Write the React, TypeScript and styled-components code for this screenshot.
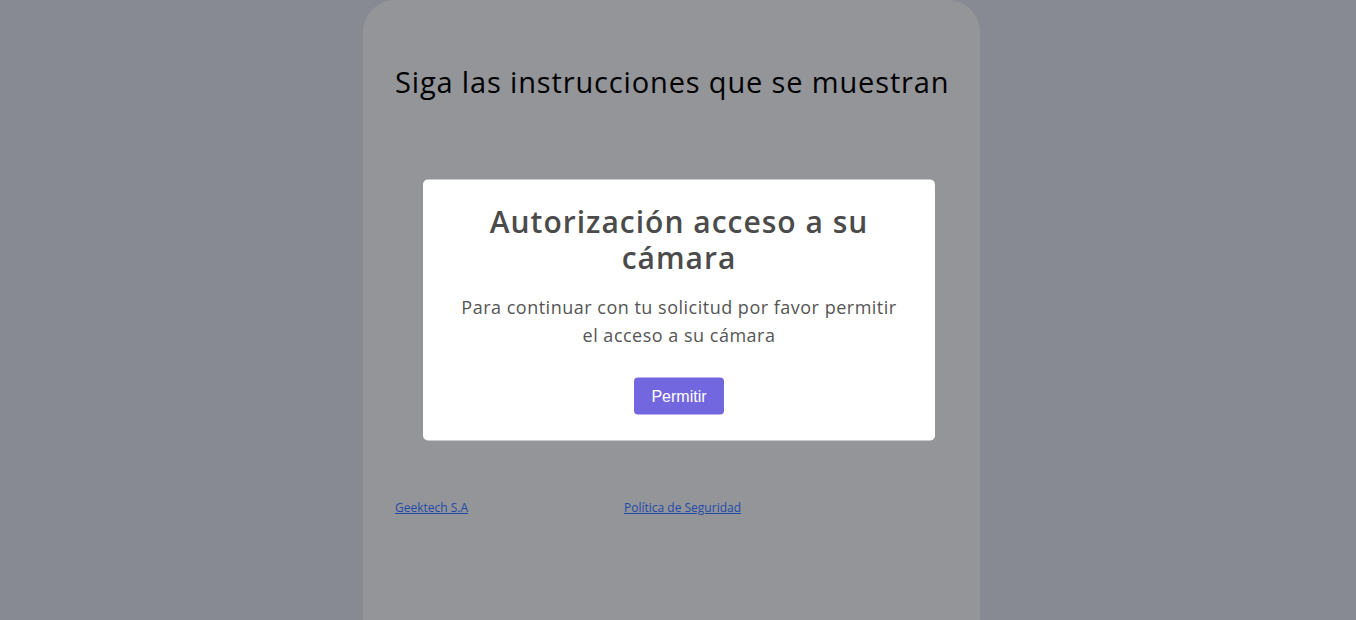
import React from "react";
import styled, { createGlobalStyle } from "styled-components";

const Global = createGlobalStyle`
  html, body { margin: 0; padding: 0; }
  body {
    background: #878a93;
    font-family: "Open Sans", "Noto Sans", sans-serif;
    overflow: hidden;
  }
`;

const Page = styled.div`
  height: 620px;
  padding-left: 363px;
  box-sizing: border-box;
  overflow: hidden;
`;

const Card = styled.main`
  width: 617px;
  height: 620px;
  background: #939599;
  border-radius: 32px 32px 0 0;
  padding: 62px 32px 0;
  box-sizing: border-box;
  display: flex;
  flex-direction: column;
`;

const Heading = styled.h1`
  margin: 0;
  font-size: 29px;
  font-weight: 400;
  letter-spacing: 0.85px;
  line-height: 40px;
  color: #000;
  text-align: center;
  white-space: nowrap;
`;

const Footer = styled.div`
  margin-top: 397px;
  display: grid;
  grid-template-columns: 229px auto;
  font-size: 12px;
`;

const FootLink = styled.a`
  color: #1f4aa8;
  text-decoration: underline;
`;

const Dialog = styled.div`
  position: fixed;
  left: 50%;
  top: 50%;
  transform: translate(-50%, -50%);
  margin-left: 1px;
  width: 512px;
  height: 261px;
  background: #fff;
  border-radius: 5px;
  box-sizing: border-box;
  padding: 24px 32px 0;
  display: flex;
  flex-direction: column;
  align-items: center;
  text-align: center;
`;

const DialogTitle = styled.h2`
  margin: 0;
  font-size: 30px;
  font-weight: 600;
  letter-spacing: 1px;
  line-height: 36px;
  color: #4b4b4b;
`;

const DialogText = styled.p`
  margin: 17px 0 0;
  font-size: 18px;
  letter-spacing: 0.5px;
  line-height: 28px;
  color: #555;
`;

const Button = styled.button`
  margin-top: 29px;
  width: 90px;
  height: 37px;
  border: none;
  border-radius: 4px;
  background: #7367e0;
  color: #fff;
  font-family: "Liberation Sans", Arial, sans-serif;
  font-size: 16px;
  cursor: pointer;
`;

export default function App() {
  return (
    <>
      <Global />
      <Page>
        <Card>
          <Heading>Siga las instrucciones que se muestran</Heading>
          <Footer>
            <FootLink href="#">Geektech S.A</FootLink>
            <FootLink href="#">Política de Seguridad</FootLink>
          </Footer>
        </Card>
      </Page>
      <Dialog role="dialog">
        <DialogTitle>Autorización acceso a su cámara</DialogTitle>
        <DialogText>
          Para continuar con tu solicitud por favor permitir el acceso a su cámara
        </DialogText>
        <Button>Permitir</Button>
      </Dialog>
    </>
  );
}
